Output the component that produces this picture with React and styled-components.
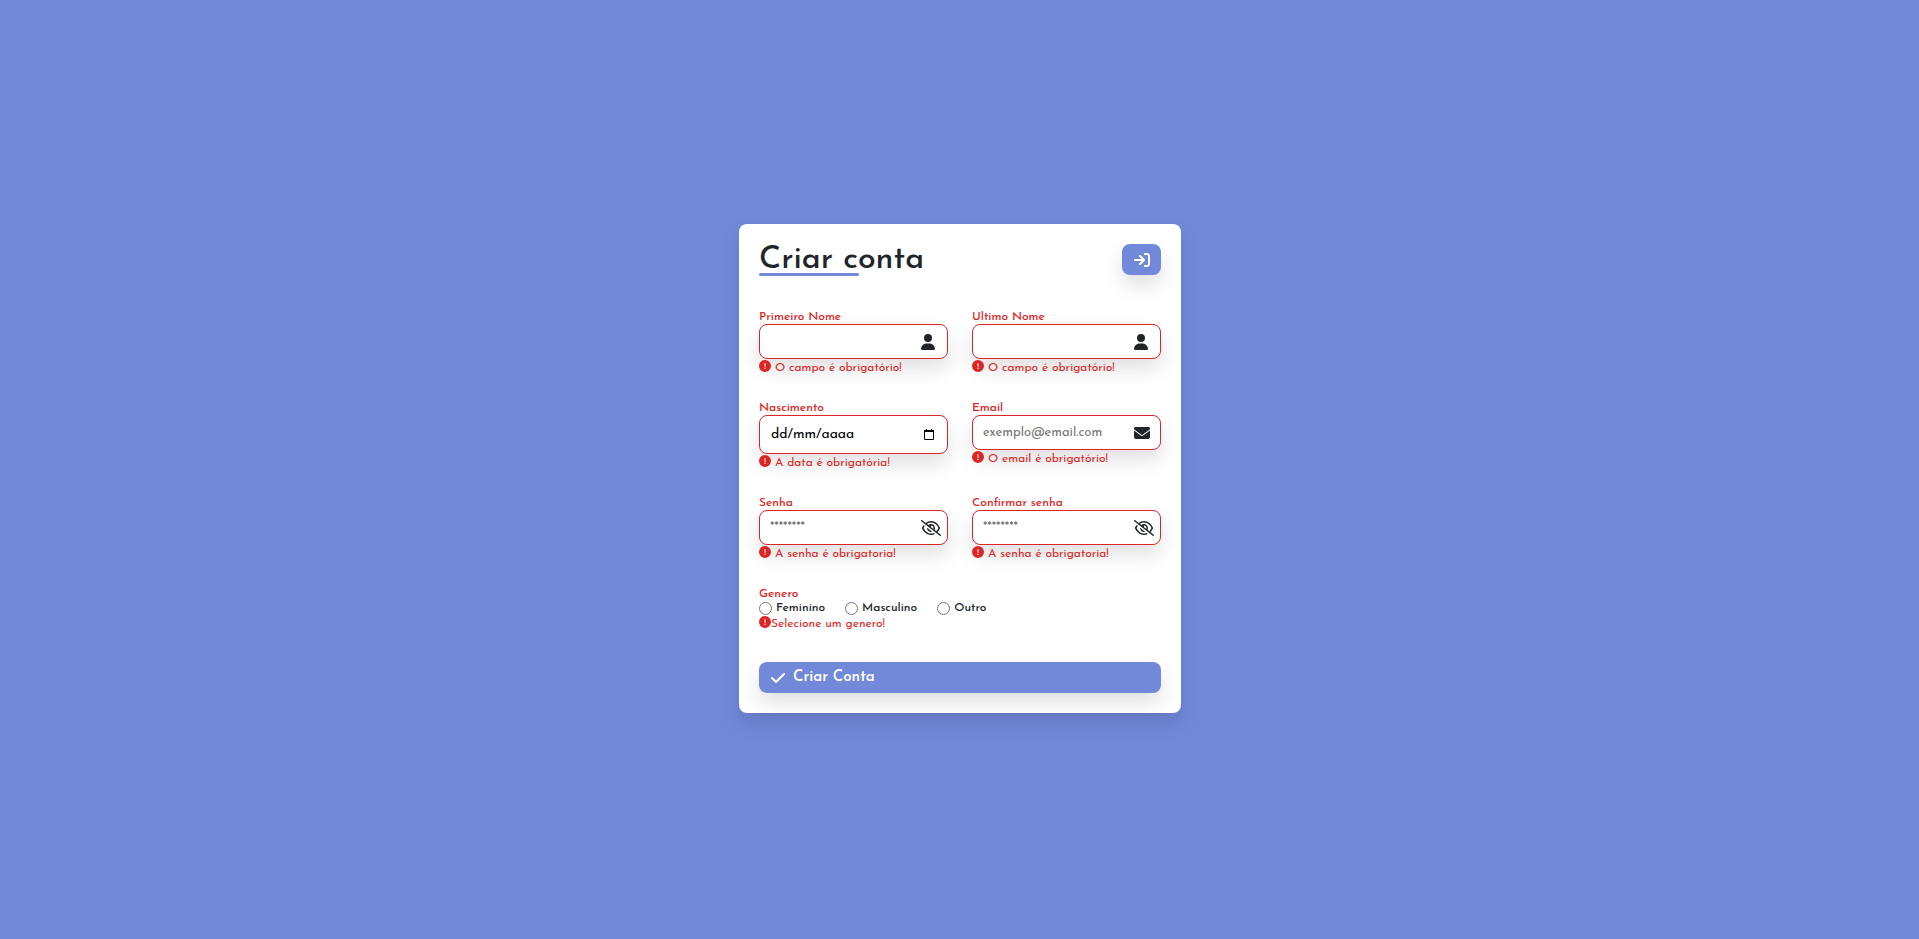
import React from "react";
import styled, { createGlobalStyle } from "styled-components";
import {
  FaArrowRightToBracket,
  FaCheck,
  FaCircleExclamation,
  FaEnvelope,
  FaRegEyeSlash,
  FaUser,
} from "react-icons/fa6";

const blue = "#7289da";
const red = "#dc2626";
const ink = "#212529";
const shadow = "0 10px 20px rgba(0, 0, 0, 0.12)";

const GlobalStyle = createGlobalStyle`
  *, *::before, *::after { box-sizing: border-box; }
  body {
    margin: 0;
    background: ${blue};
    color: ${ink};
    font-family: "Josefin Sans", Lato, sans-serif;
    font-size: 12px;
    font-weight: 400;
    line-height: 15px;
  }
  button, input { font: inherit; }
`;

const Page = styled.main`
  min-height: 100vh;
  padding: 0 0 2px 1px;
  display: flex;
  align-items: center;
  justify-content: center;
`;

const Card = styled.form`
  width: 100%;
  max-width: 442px;
  padding: 20px;
  border-radius: 8px;
  background: #fff;
  box-shadow: ${shadow};
`;

const Header = styled.header`
  display: flex;
  align-items: flex-start;
  justify-content: space-between;
  margin-bottom: 33px;
`;

const Title = styled.h1`
  margin: 0;
  padding-top: 3px;
  font-size: 32px;
  font-weight: 500;
  line-height: 26px;

  &::after {
    content: "";
    display: block;
    width: 100px;
    height: 3px;
    border-radius: 4px;
    background: ${blue};
  }
`;

const Button = styled.button`
  display: flex;
  align-items: center;
  justify-content: ${({ $block }) => ($block ? "flex-start" : "center")};
  gap: 8px;
  width: ${({ $block }) => ($block ? "100%" : "39px")};
  height: 31px;
  padding: 0 ${({ $block }) => ($block ? "12px" : "0")};
  border: 0;
  border-radius: 8px;
  background: ${blue};
  color: #fff;
  font-size: 15px;
  font-weight: 600;
  box-shadow: ${shadow};
  cursor: pointer;

  svg {
    width: ${({ $block }) => ($block ? "14px" : "16px")};
    height: 16px;
  }
`;

const Fields = styled.div`
  display: grid;
  grid-template-columns: 1fr 1fr;
  gap: 26px 24px;
  margin-bottom: 26px;
`;

const Label = styled.label`
  display: block;
  padding-top: 2px;
  line-height: 13px;
  font-weight: 500;
  color: ${red};
`;

const InputBox = styled.div`
  position: relative;
`;

const Input = styled.input`
  display: block;
  width: 100%;
  height: ${({ $tall }) => ($tall ? "39px" : "35px")};
  padding: 0 32px 0 ${({ $tall }) => ($tall ? "11px" : "10px")};
  border: 1px solid ${red};
  border-radius: 8px;
  background: #fff;
  color: #000;
  font-size: ${({ $tall }) => ($tall ? "14px" : "13px")};
  box-shadow: ${shadow};
  outline: 0;

  &::placeholder {
    color: ${({ $tall }) => ($tall ? "#000" : "#757575")};
    opacity: 1;
  }
`;

const IconSlot = styled.span`
  position: absolute;
  top: 0;
  right: 0;
  bottom: 0;
  width: 27px;
  display: flex;
  align-items: center;
  pointer-events: none;

  svg {
    flex: none;
    width: ${({ $width }) => $width}px;
    height: 16px;
  }
`;

const ErrorText = styled.p`
  position: relative;
  display: flex;
  align-items: flex-start;
  gap: ${({ $tight }) => ($tight ? "0" : "4px")};
  height: 15px;
  margin: 0;
  padding-top: 1px;
  color: ${red};
  line-height: 16px;

  svg {
    width: 12px;
    height: 12px;
  }
`;

const Gender = styled.fieldset`
  margin: 0 0 32px;
  padding: 0;
  border: 0;
`;

const Legend = styled.legend`
  padding: 2px 0 0;
  line-height: 13px;
  font-weight: 500;
  color: ${red};
`;

const Options = styled.div`
  display: flex;
  gap: 20px;
  height: 14px;
`;

const Option = styled.label`
  display: flex;
  align-items: center;
  gap: 4px;
  font-weight: 500;
`;

const Radio = styled.input`
  width: 13px;
  height: 13px;
  margin: 0;
`;

function CalendarIcon() {
  return (
    <svg viewBox="0 0 16 16" fill="none" stroke="#000" aria-hidden="true">
      <path d="M3.5 4.5h9v8h-9z" />
      <path d="M3 4h10" strokeWidth="2" />
      <path d="M5.5 2v2M10.5 2v2" />
    </svg>
  );
}

const fields = [
  { id: "first", label: "Primeiro Nome", icon: <FaUser />, iconWidth: 14, error: "O campo é obrigatório!" },
  { id: "last", label: "Ultimo Nome", icon: <FaUser />, iconWidth: 14, error: "O campo é obrigatório!" },
  { id: "birth", label: "Nascimento", placeholder: "dd/mm/aaaa", tall: true, icon: <CalendarIcon />, iconWidth: 16, error: "A data é obrigatória!" },
  { id: "email", label: "Email", type: "email", placeholder: "exemplo@email.com", icon: <FaEnvelope />, iconWidth: 16, error: "O email é obrigatório!" },
  { id: "password", label: "Senha", type: "password", placeholder: "********", icon: <FaRegEyeSlash />, iconWidth: 20, error: "A senha é obrigatoria!" },
  { id: "confirm", label: "Confirmar senha", type: "password", placeholder: "********", icon: <FaRegEyeSlash />, iconWidth: 20, error: "A senha é obrigatoria!" },
];

function Field({ id, label, type = "text", placeholder, tall, icon, iconWidth, error }) {
  return (
    <div>
      <Label htmlFor={id}>{label}</Label>
      <InputBox>
        <Input id={id} type={type} placeholder={placeholder} $tall={tall} aria-describedby={`${id}-error`} />
        <IconSlot $width={iconWidth}>{icon}</IconSlot>
      </InputBox>
      <ErrorText id={`${id}-error`}>
        <FaCircleExclamation />
        {error}
      </ErrorText>
    </div>
  );
}

export default function App() {
  return (
    <Page>
      <GlobalStyle />
      <Card noValidate onSubmit={(event) => event.preventDefault()}>
        <Header>
          <Title>Criar conta</Title>
          <Button type="button" aria-label="Entrar">
            <FaArrowRightToBracket />
          </Button>
        </Header>
        <Fields>
          {fields.map((field) => (
            <Field key={field.id} {...field} />
          ))}
        </Fields>
        <Gender>
          <Legend>Genero</Legend>
          <Options>
            {["Feminino", "Masculino", "Outro"].map((name) => (
              <Option key={name}>
                <Radio type="radio" name="gender" value={name} />
                {name}
              </Option>
            ))}
          </Options>
          <ErrorText $tight>
            <FaCircleExclamation />
            Selecione um genero!
          </ErrorText>
        </Gender>
        <Button type="submit" $block>
          <FaCheck />
          Criar Conta
        </Button>
      </Card>
    </Page>
  );
}
